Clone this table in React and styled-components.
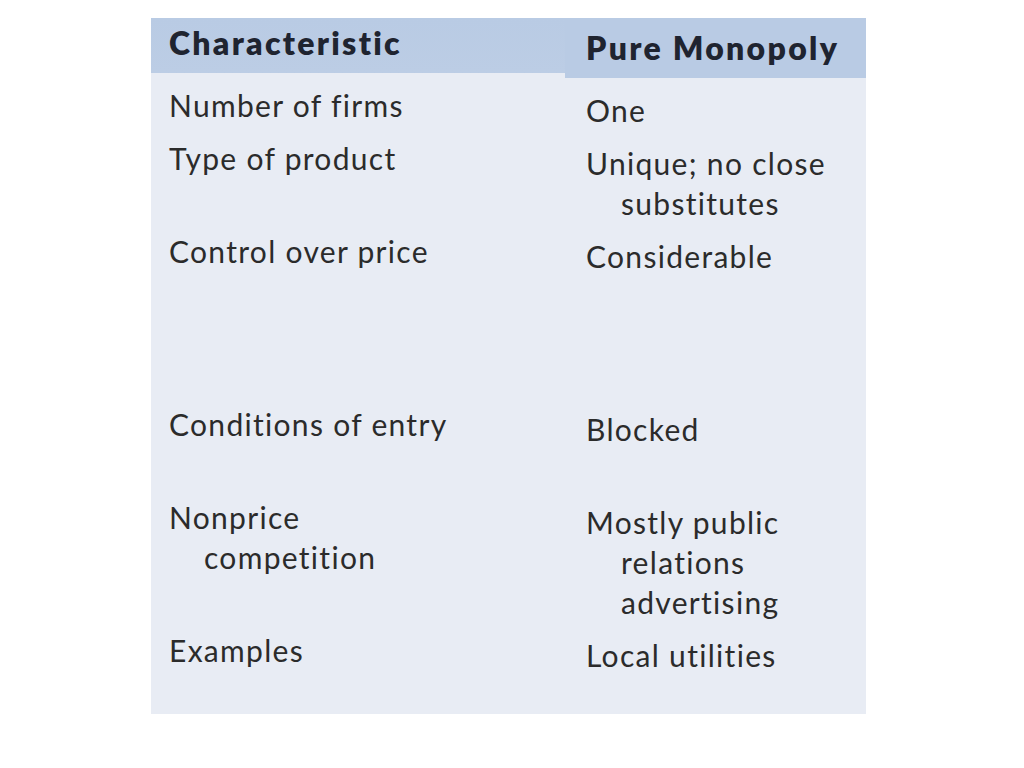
import React from "react";
import styled, { createGlobalStyle } from "styled-components";

// -- -- --

const GlobalStyle = createGlobalStyle`
  html, body {
    margin: 0;
    padding: 0;
    background: #ffffff;
  }
  body {
    font-family: Lato, "Open Sans", "Noto Sans", sans-serif;
    font-variant-ligatures: none;
    color: #2b2b2b;
  }
`;

const Page = styled.div`
  padding: 18px 0 0 151px;
`;

const Table = styled.div`
  display: grid;
  grid-template-columns: 414px 301px;
  width: 715px;
  background: #e8ecf4;
`;

const HeadCell = styled.div`
  height: 60px;
  box-sizing: border-box;
  padding: ${(p) => (p.$right ? "10px 0 0 21px" : "5px 0 0 18px")};
  font-size: 32px;
  font-weight: 800;
  letter-spacing: 2.3px;
  line-height: 40px;
  white-space: nowrap;
  color: #1f2430;
  background: ${(p) =>
    p.$right
      ? "#b9cbe4"
      : "linear-gradient(to bottom, #b9cbe4 0, #bccde5 55px, #e8ecf4 55px)"};
`;

const Cell = styled.div`
  height: ${(p) => p.$h}px;
  box-sizing: border-box;
  padding: ${(p) => (p.$right ? "12px 0 0 21px" : "7px 0 0 18px")};
  font-size: 30px;
  letter-spacing: 1.3px;
  line-height: 40px;
`;

const Line = styled.div`
  white-space: nowrap;
  padding-left: ${(p) => (p.$indent ? 35 : 0)}px;
`;

// -- -- --

const rows = [
  { h: 53, left: ["Number of firms"], right: ["One"] },
  { h: 93, left: ["Type of product"], right: ["Unique; no close", "substitutes"] },
  { h: 173, left: ["Control over price"], right: ["Considerable"] },
  { h: 93, left: ["Conditions of entry"], right: ["Blocked"] },
  { h: 133, left: ["Nonprice", "competition"], right: ["Mostly public", "relations", "advertising"] },
  { h: 91, left: ["Examples"], right: ["Local utilities"] },
];

function Lines({ items }) {
  return items.map((text, i) => (
    <Line key={i} $indent={i > 0}>
      {text}
    </Line>
  ));
}

export default function App() {
  return (
    <Page>
      <GlobalStyle />
      <Table>
        <HeadCell>Characteristic</HeadCell>
        <HeadCell $right>Pure Monopoly</HeadCell>
        {rows.map((row, i) => (
          <React.Fragment key={i}>
            <Cell $h={row.h}>
              <Lines items={row.left} />
            </Cell>
            <Cell $h={row.h} $right>
              <Lines items={row.right} />
            </Cell>
          </React.Fragment>
        ))}
      </Table>
    </Page>
  );
}
